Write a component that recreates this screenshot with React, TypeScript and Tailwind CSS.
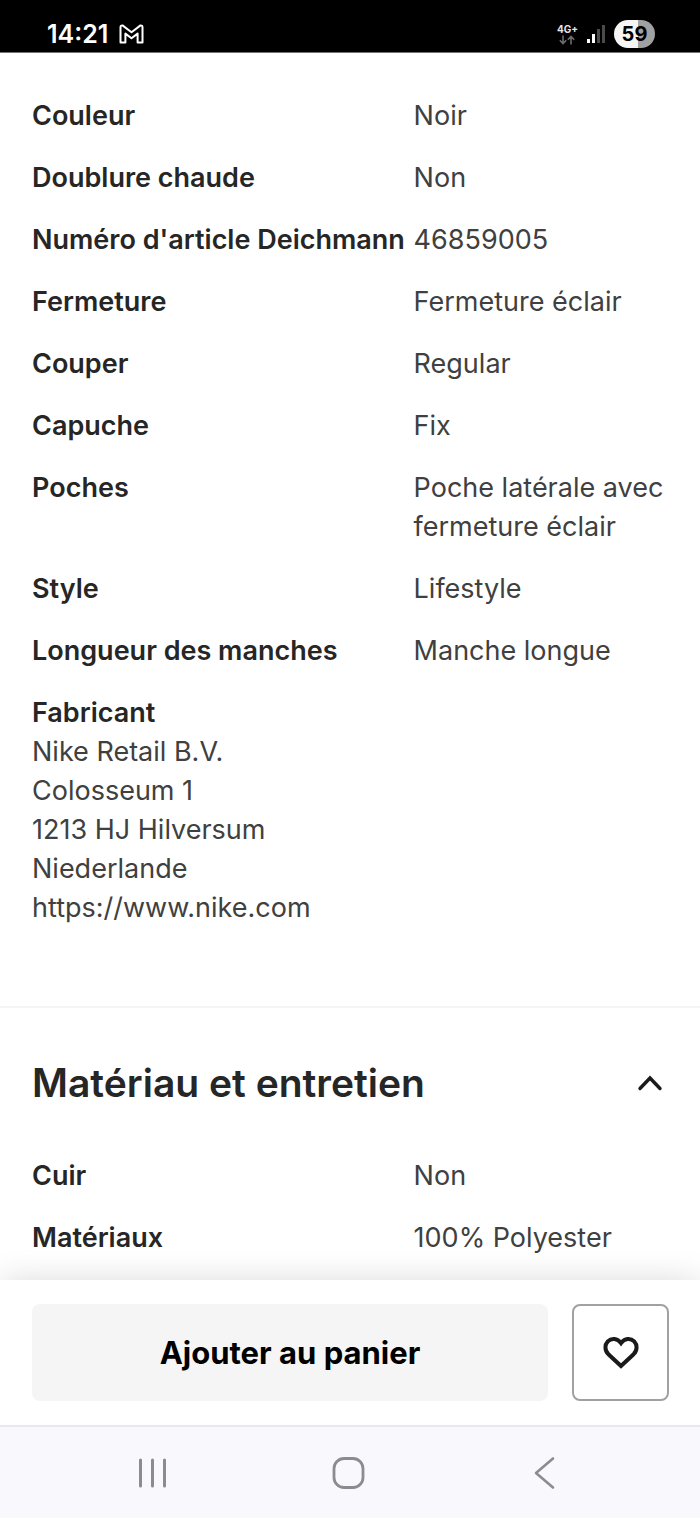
import { useState } from "react";

type Spec = {
  label: string;
  value: string;
};

const details: Spec[] = [
  { label: "Couleur", value: "Noir" },
  { label: "Doublure chaude", value: "Non" },
  { label: "Numéro d'article Deichmann", value: "46859005" },
  { label: "Fermeture", value: "Fermeture éclair" },
  { label: "Couper", value: "Regular" },
  { label: "Capuche", value: "Fix" },
  { label: "Poches", value: "Poche latérale avec fermeture éclair" },
  { label: "Style", value: "Lifestyle" },
  { label: "Longueur des manches", value: "Manche longue" }
];

const materials: Spec[] = [
  { label: "Cuir", value: "Non" },
  { label: "Matériaux", value: "100% Polyester" }
];

const manufacturer = ["Nike Retail B.V.", "Colosseum 1", "1213 HJ Hilversum", "Niederlande"];

function StatusBar() {
  return (
    <header className="flex h-[53px] items-center justify-between border-b border-neutral-500 bg-black pt-4 pr-[45px] pl-[47px] text-white">
      <div className="flex items-center gap-[11px]">
        <span className="text-[25px] leading-7 font-semibold">14:21</span>
        <svg width="25" height="20" viewBox="0 0 25 20" fill="none" stroke="currentColor" strokeWidth="2" strokeLinejoin="round">
          <path d="M1.5 3.2 Q1.5 1.2 3.5 1.4 L12.5 8.2 L21.5 1.4 Q23.5 1.2 23.5 3.2 V18.5 H18.6 V9.6 L12.5 14.2 L6.4 9.6 V18.5 H1.5 Z" />
        </svg>
      </div>
      <div className="flex items-center gap-[9px]">
        <div className="flex flex-col items-center">
          <span className="text-[10px] leading-[11px] font-bold text-neutral-200">4G+</span>
          <svg width="16" height="10" viewBox="0 0 16 10" fill="none" stroke="#6b6b6b" strokeWidth="1.6">
            <path d="M4 0.5 V8.5 M0.8 5.2 L4 8.6 L7.2 5.2 M12 9.5 V1.5 M8.8 4.8 L12 1.4 L15.2 4.8" />
          </svg>
        </div>
        <svg width="18" height="20" viewBox="0 0 18 20">
          <rect x="0" y="15" width="3" height="4" fill="#fff" />
          <rect x="5" y="10" width="3" height="9" fill="#fff" />
          <rect x="10" y="5" width="3" height="14" fill="#4a4a4a" />
          <rect x="15" y="1" width="3" height="18" fill="#4a4a4a" />
        </svg>
        <span className="flex h-7 w-[41px] items-center justify-center rounded-full bg-linear-to-r from-neutral-100 from-58% to-neutral-400 to-58% text-xl font-bold text-black">
          59
        </span>
      </div>
    </header>
  );
}

function SpecTable({ rows }: { rows: Spec[] }) {
  return (
    <table className="w-full table-fixed text-left">
      <tbody>
        {rows.map((row) => (
          <tr key={row.label} className="align-top">
            <th scope="row" className="w-3/5 pb-[23px] font-semibold whitespace-nowrap text-neutral-800">
              {row.label}
            </th>
            <td className="pb-[23px]">{row.value}</td>
          </tr>
        ))}
      </tbody>
    </table>
  );
}

function BottomBar() {
  const [liked, setLiked] = useState(false);

  return (
    <div className="sticky bottom-0 mt-auto">
      <div className="flex gap-6 bg-white py-6 pr-[31px] pl-8 shadow-[0_0_32px_-2px_rgba(0,0,0,0.16)]">
        <button className="h-[97px] flex-1 rounded-lg bg-neutral-100 text-[31px] font-bold text-black">
          Ajouter au panier
        </button>
        <button
          aria-label="Favoris"
          aria-pressed={liked}
          onClick={() => setLiked(!liked)}
          className="flex h-[97px] w-[97px] items-center justify-center rounded-lg border-2 border-neutral-400"
        >
          <svg width="36" height="34" viewBox="0 0 36 34" fill={liked ? "#1a1a1a" : "none"} stroke="#1a1a1a" strokeWidth="4">
            <path d="M18 30 L5.4 18.2 C1.5 14.2 1.6 8.8 4.8 5.4 C8.4 1.8 14.4 2 18 7 C21.6 2 27.6 1.8 31.2 5.4 C34.4 8.8 34.5 14.2 30.6 18.2 Z" />
          </svg>
        </button>
      </div>
      <nav className="grid h-[93px] grid-cols-3 border-t-2 border-[#e8e8ee] bg-[#f8f8fd] pr-[58px] pl-[54px] text-[#8c8c90]">
        <button aria-label="Applications récentes" className="flex items-center justify-center">
          <svg width="34" height="34" viewBox="0 0 34 34" fill="none" stroke="currentColor" strokeWidth="3" strokeLinecap="round">
            <path d="M5.5 4 V30 M17.5 4 V30 M29.5 4 V30" />
          </svg>
        </button>
        <button aria-label="Accueil" className="flex items-center justify-center">
          <svg width="34" height="34" viewBox="0 0 34 34" fill="none" stroke="currentColor" strokeWidth="2.8">
            <rect x="3" y="2.5" width="29" height="29" rx="10" />
          </svg>
        </button>
        <button aria-label="Retour" className="flex items-center justify-center">
          <svg width="34" height="34" viewBox="0 0 34 34" fill="none" stroke="currentColor" strokeWidth="2.6" strokeLinecap="round" strokeLinejoin="round">
            <path d="M26 2.5 L9 17 L26 31.5" />
          </svg>
        </button>
      </nav>
    </div>
  );
}

export default function App() {
  const [open, setOpen] = useState(true);

  return (
    <div className="flex min-h-screen flex-col bg-white font-[Inter,sans-serif] text-[27px] leading-[39px] text-neutral-700">
      <StatusBar />

      <main>
        <section className="px-8 pt-[43px] pb-[79px]">
          <SpecTable rows={details} />
          <h3 className="font-semibold text-neutral-800">Fabricant</h3>
          <address className="not-italic">
            {manufacturer.map((line) => (
              <p key={line}>{line}</p>
            ))}
            <a href="https://www.nike.com">https://www.nike.com</a>
          </address>
        </section>

        <section className="border-t-2 border-neutral-100 px-8 pt-[50px]">
          <h2>
            <button
              aria-expanded={open}
              onClick={() => setOpen(!open)}
              className="flex w-full items-center justify-between pr-[5px] text-left text-[39px] leading-[50px] font-semibold text-neutral-800"
            >
              Matériau et entretien
              <svg
                width="26"
                height="16"
                viewBox="0 0 26 16"
                fill="none"
                stroke="#1a1a1a"
                strokeWidth="3.4"
                strokeLinecap="round"
                className={open ? "" : "rotate-180"}
              >
                <path d="M3 13.5 L13 3 L23 13.5" />
              </svg>
            </button>
          </h2>
          {open ? (
            <div className="pt-12">
              <SpecTable rows={materials} />
            </div>
          ) : null}
        </section>
      </main>

      <BottomBar />
    </div>
  );
}
